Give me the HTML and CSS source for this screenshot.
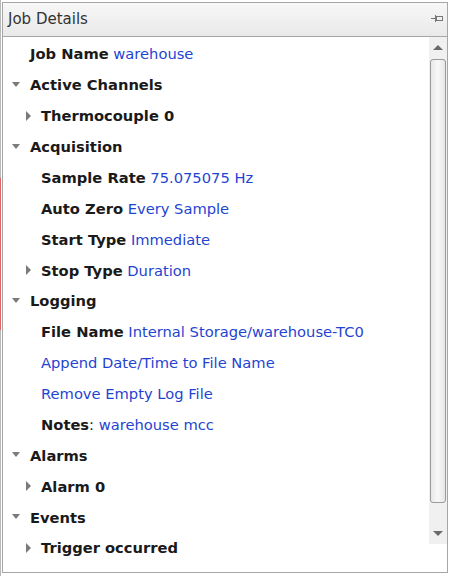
FILE: index.html
```html
<!DOCTYPE html>
<html lang="en">
<head>
    <meta charset="UTF-8">
    <meta name="viewport" content="width=device-width, initial-scale=1.0">
    <title>Job Details</title>
    <link rel="stylesheet" href="styles.css">
</head>
<body>
    <div class="page">
        <!-- 左侧边缘 -->
        <div class="edge">
            <div class="edge_gray edge_top"></div>
            <div class="edge_red"></div>
            <div class="edge_gray edge_fill"></div>
        </div>

        <div class="panel">
            <!-- 标题栏 -->
            <div class="panel_head">
                <span class="panel_title">Job Details</span>
                <svg class="pin" width="13" height="9" viewBox="0 0 13 9">
                    <path d="M0 4.5H4" stroke="#777" stroke-width="1"/>
                    <path d="M4.5 1V8" stroke="#777" stroke-width="1"/>
                    <rect x="5.5" y="2.5" width="6" height="4" fill="none" stroke="#777" stroke-width="1"/>
                </svg>
            </div>

            <div class="panel_body">
                <!-- 树形列表 -->
                <ul class="tree">
                    <li class="row lv0"><span class="tw"></span><b>Job Name</b>&nbsp;<span class="val">warehouse</span></li>
                    <li class="row lv0"><span class="tw open"></span><b>Active Channels</b></li>
                    <li class="row lv1"><span class="tw shut"></span><b>Thermocouple 0</b></li>
                    <li class="row lv0"><span class="tw open"></span><b>Acquisition</b></li>
                    <li class="row lv1"><span class="tw"></span><b>Sample Rate</b>&nbsp;<span class="val">75.075075 Hz</span></li>
                    <li class="row lv1"><span class="tw"></span><b>Auto Zero</b>&nbsp;<span class="val">Every Sample</span></li>
                    <li class="row lv1"><span class="tw"></span><b>Start Type</b>&nbsp;<span class="val">Immediate</span></li>
                    <li class="row lv1"><span class="tw shut"></span><b>Stop Type</b>&nbsp;<span class="val">Duration</span></li>
                    <li class="row lv0"><span class="tw open"></span><b>Logging</b></li>
                    <li class="row lv1"><span class="tw"></span><b>File Name</b>&nbsp;<span class="val">Internal Storage/warehouse-TC0</span></li>
                    <li class="row lv1"><span class="tw"></span><span class="val">Append Date/Time to File Name</span></li>
                    <li class="row lv1"><span class="tw"></span><span class="val">Remove Empty Log File</span></li>
                    <li class="row lv1"><span class="tw"></span><b>Notes</b>:&nbsp;<span class="val">warehouse mcc</span></li>
                    <li class="row lv0"><span class="tw open"></span><b>Alarms</b></li>
                    <li class="row lv1"><span class="tw shut"></span><b>Alarm 0</b></li>
                    <li class="row lv0"><span class="tw open"></span><b>Events</b></li>
                    <li class="row lv1"><span class="tw shut"></span><b>Trigger occurred</b></li>
                </ul>

                <!-- 竖向滚动条 -->
                <div class="scrollbar">
                    <span class="sb_btn"><i class="sb_up"></i></span>
                    <span class="sb_thumb"></span>
                    <span class="sb_btn"><i class="sb_down"></i></span>
                </div>
            </div>
        </div>
    </div>
</body>
</html>
```

FILE: styles.css
```css
*{
    margin: 0;
    padding: 0;
    box-sizing: border-box;
}
li{
    list-style: none;
}
body{
    width: 450px;
    height: 576px;
    background: #fff;
    font-family: "DejaVu Sans", Verdana, sans-serif;
    overflow: hidden;
}
.page{
    display: flex;
    height: 576px;
}
.edge{
    width: 1px;
    display: flex;
    flex-direction: column;
    margin-right: 1px;
}
.edge_gray{
    background: #b8b8b8;
}
.edge_top{
    height: 178px;
}
.edge_red{
    height: 152px;
    background: #e06666;
}
.edge_fill{
    flex: 1;
}
.panel{
    width: 446px;
    height: 571px;
    margin-top: 2px;
    border: 1px solid #a6a6a6;
    display: flex;
    flex-direction: column;
}
.panel_head{
    height: 34px;
    display: flex;
    align-items: center;
    justify-content: space-between;
    padding: 0 3px 1px 5px;
    background: linear-gradient(#f7f7f7, #e9e9e9);
    border-bottom: 1px solid #a6a6a6;
}
.panel_title{
    font-size: 15px;
    color: #333;
}
.pin{
    margin-top: -2px;
}
.panel_body{
    flex: 1;
    display: flex;
    min-height: 0;
}
.tree{
    flex: 1;
    padding-top: 1.5px;
}
.row{
    height: 30.875px;
    display: flex;
    align-items: center;
    font-size: 14.7px;
    color: #1a1a1a;
    white-space: nowrap;
}
.row b{
    font-weight: bold;
}
.row .val{
    color: #1f44d2;
}
.lv0{
    padding-left: 8px;
}
.lv1{
    padding-left: 19px;
}
.tw{
    width: 19px;
    height: 10px;
    flex-shrink: 0;
    position: relative;
}
.tw.open::before{
    content: "";
    position: absolute;
    left: 1px;
    top: 2px;
    border-left: 4.5px solid transparent;
    border-right: 4.5px solid transparent;
    border-top: 5px solid #7a7a7a;
}
.tw.shut::before{
    content: "";
    position: absolute;
    left: 4px;
    top: 0;
    border-top: 5px solid transparent;
    border-bottom: 5px solid transparent;
    border-left: 5px solid #7a7a7a;
}
.scrollbar{
    width: 18px;
    height: 507px;
    display: flex;
    flex-direction: column;
    align-items: center;
    background: #f0f0f0;
    padding-top: 1px;
}
.sb_btn{
    width: 18px;
    height: 19px;
    display: flex;
    align-items: center;
    justify-content: center;
}
.sb_up{
    border-left: 5px solid transparent;
    border-right: 5px solid transparent;
    border-bottom: 5px solid #6a6a6a;
}
.sb_down{
    border-left: 5px solid transparent;
    border-right: 5px solid transparent;
    border-top: 5px solid #6a6a6a;
}
.sb_thumb{
    width: 16px;
    height: 444px;
    margin: 2px 0 21px;
    border: 1px solid #9a9a9a;
    border-radius: 3px;
    background: linear-gradient(to right, #e8e8e8, #f8f8f8 50%, #e6e6e6);
}
```
